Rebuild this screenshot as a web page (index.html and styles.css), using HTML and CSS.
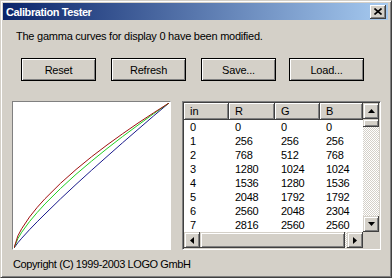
FILE: index.html
```html
<!DOCTYPE html>
<html>
	<head>
		<meta charset="UTF-8">
		<title>Calibration Tester</title>
		<link rel="stylesheet" href="styles.css">
	</head>
	<body>
		<div id="win">
			<div class="title">
				<span>Calibration Tester</span>
				<span class="close"><svg width="8" height="7" viewBox="0 0 8 7"><path d="M0.5 0.5L7.5 6.5M7.5 0.5L0.5 6.5" stroke="#000" stroke-width="1.6"/></svg></span>
			</div>
			<p class="msg">The gamma curves for display 0 have been modified.</p>
			<div class="btns">
				<span class="btn">Reset</span>
				<span class="btn">Refresh</span>
				<span class="btn">Save...</span>
				<span class="btn load">Load...</span>
			</div>
			<div class="panels">
				<div class="graph">
					<svg width="155" height="145" viewBox="0 0 155 145">
						<polyline fill="none" stroke="#1a1a8c" points="0,145 3.9,139.7 7.75,135.2 15.5,126.7 23.25,118.7 31,111 46.5,95.9 62,81.4 77.5,67.3 93,53.5 108.5,39.8 124,26.4 139.5,13 155,0"/>
						<polyline fill="none" stroke="#22d022" points="0,145 3.9,135.5 7.75,129.2 15.5,118.6 23.25,109.4 31,100.9 46.5,85.5 62,71.3 77.5,58.2 93,45.6 108.5,33.6 124,22.1 139.5,10.8 155,0"/>
						<polyline fill="none" stroke="#a01010" points="0,145 3.9,132.8 7.75,125.6 15.5,114 23.25,104.3 31,95.7 46.5,80.3 62,66.5 77.5,53.8 93,42 108.5,30.8 124,20.1 139.5,9.9 155,0"/>
					</svg>
				</div>
				<div class="list">
					<div class="rows">
						<div class="hd"><span>in</span><span>R</span><span>G</span><span>B</span></div>
						<div class="row"><span>0</span><span>0</span><span>0</span><span>0</span></div>
						<div class="row"><span>1</span><span>256</span><span>256</span><span>256</span></div>
						<div class="row"><span>2</span><span>768</span><span>512</span><span>768</span></div>
						<div class="row"><span>3</span><span>1280</span><span>1024</span><span>1024</span></div>
						<div class="row"><span>4</span><span>1536</span><span>1280</span><span>1536</span></div>
						<div class="row"><span>5</span><span>2048</span><span>1792</span><span>1792</span></div>
						<div class="row"><span>6</span><span>2560</span><span>2048</span><span>2304</span></div>
						<div class="row"><span>7</span><span>2816</span><span>2560</span><span>2560</span></div>
					</div>
					<div class="vscroll">
						<span class="sb"><svg width="7" height="4"><polygon points="3.5,0 7,4 0,4" fill="#000"/></svg></span>
						<span class="thumb vt"></span>
						<span class="track"></span>
						<span class="sb"><svg width="7" height="4"><polygon points="0,0 7,0 3.5,4" fill="#000"/></svg></span>
					</div>
					<div class="hscroll">
						<span class="sb"><svg width="4" height="7"><polygon points="4,0 4,7 0,3.5" fill="#000"/></svg></span>
						<span class="thumb ht"></span>
						<span class="track hgap"></span>
						<span class="sb"><svg width="4" height="7"><polygon points="0,0 4,3.5 0,7" fill="#000"/></svg></span>
					</div>
					<div class="corner"></div>
				</div>
			</div>
			<p class="copy">Copyright (C) 1999-2003 LOGO GmbH</p>
		</div>
	</body>
</html>
```
FILE: styles.css
```css
*{margin:0;padding:0;box-sizing:border-box;}
html,body{width:392px;height:278px;overflow:hidden;}
body{font:11px "Liberation Sans",Arial,sans-serif;color:#000;background:#d4d0c8;}

#win{width:392px;height:278px;background:#d4d0c8;border:1px solid;border-color:#d4d0c8 #404040 #404040 #d4d0c8;box-shadow:inset 1px 1px #fff,inset -1px -1px #808080;padding:2px 3px 0 2px;}

.title{height:17px;display:flex;align-items:center;justify-content:space-between;padding:0 2px 0 3px;background:linear-gradient(to right,#0a246a,#a6caf0);color:#fff;font-weight:bold;letter-spacing:-0.4px;}
.close{width:16px;height:14px;display:flex;align-items:center;justify-content:center;background:#d4d0c8;box-shadow:inset -1px -1px #404040,inset 1px 1px #fff,inset -2px -2px #808080;}

.msg{margin:10px 0 0 13px;line-height:13px;letter-spacing:-0.24px;}

.btns{display:flex;gap:15px;margin:15px 0 0 18px;}
.btn{width:75px;height:23px;display:flex;align-items:center;justify-content:center;border:1px solid #000;box-shadow:inset 1px 1px #fff,inset -1px -1px #808080;letter-spacing:-0.2px;}
.load{margin-left:-2px;}

.panels{display:flex;gap:11px;margin:20px 0 0 9px;}
.graph{width:159px;height:149px;padding:1px;background:#fff;border:1px solid;border-color:#808080 #fff #fff #808080;}
.graph svg{display:block;}

.list{width:199px;height:149px;padding:1px;background:#fff;border:1px solid;border-color:#808080 #fff #fff #808080;box-shadow:inset 1px 1px #404040,inset -1px -1px #d4d0c8;display:grid;grid-template-columns:179px 16px;grid-template-rows:129px 16px;}
.hd,.row{display:grid;grid-template-columns:45px 46px 45px 43px;}
.hd{height:17px;}
.hd span{background:#d4d0c8;box-shadow:inset -1px -1px #404040,inset 1px 1px #fff,inset -2px -2px #808080;padding:2px 0 0 6px;line-height:13px;}
.row{height:14px;line-height:14px;letter-spacing:-0.3px;}
.row span{padding-left:6px;}

.vscroll{display:flex;flex-direction:column;}
.hscroll{display:flex;}
.sb,.thumb{background:#d4d0c8;box-shadow:inset -1px -1px #404040,inset 1px 1px #d4d0c8,inset 2px 2px #fff,inset -2px -2px #808080;}
.sb{width:16px;height:16px;display:flex;align-items:center;justify-content:center;}
.vt{height:8px;}
.ht{flex:1;}
.track{flex:1;background:repeating-conic-gradient(#fff 0 25%,#d4d0c8 0 50%) 0 0/2px 2px;}
.hgap{flex:0 0 2px;}
.corner{background:#d4d0c8;}

.copy{margin:8px 0 0 10px;line-height:13px;letter-spacing:-0.4px;}
```
